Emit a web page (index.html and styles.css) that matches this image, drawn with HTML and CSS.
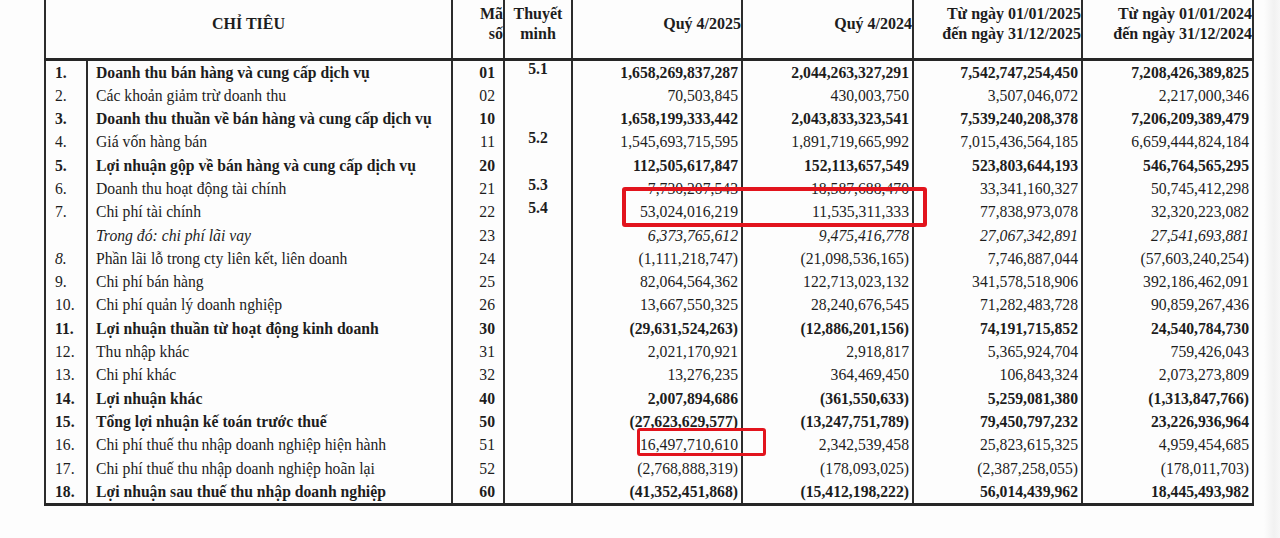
FILE: index.html
```html
<!DOCTYPE html>
<html lang="vi">
<head>
<meta charset="utf-8">
<title>Kết quả hoạt động kinh doanh</title>
<link rel="stylesheet" href="styles.css">
</head>
<body>
<div class="sheet">
  <table class="report">
    <colgroup>
      <col class="c-stt"><col class="c-name"><col class="c-code"><col class="c-note">
      <col class="c-q1"><col class="c-q2"><col class="c-y1"><col class="c-y2">
    </colgroup>
    <thead>
      <tr>
        <th colspan="2" class="h-title">CHỈ TIÊU</th>
        <th class="h-code">Mã<br>số</th>
        <th class="h-note">Thuyết<br>minh</th>
        <th class="h-num">Quý 4/2025</th>
        <th class="h-num">Quý 4/2024</th>
        <th class="h-num h-reg">Từ ngày 01/01/2025<br>đến ngày 31/12/2025</th>
        <th class="h-num h-reg">Từ ngày 01/01/2024<br>đến ngày 31/12/2024</th>
      </tr>
    </thead>
    <tbody>
      <tr class="b"><td class="stt">1.</td><td class="name">Doanh thu bán hàng và cung cấp dịch vụ</td><td class="code">01</td><td class="note">5.1</td><td class="num">1,658,269,837,287</td><td class="num">2,044,263,327,291</td><td class="num">7,542,747,254,450</td><td class="num">7,208,426,389,825</td></tr>
      <tr><td class="stt">2.</td><td class="name">Các khoản giảm trừ doanh thu</td><td class="code">02</td><td class="note"></td><td class="num">70,503,845</td><td class="num">430,003,750</td><td class="num">3,507,046,072</td><td class="num">2,217,000,346</td></tr>
      <tr class="b"><td class="stt">3.</td><td class="name">Doanh thu thuần về bán hàng và cung cấp dịch vụ</td><td class="code">10</td><td class="note"></td><td class="num">1,658,199,333,442</td><td class="num">2,043,833,323,541</td><td class="num">7,539,240,208,378</td><td class="num">7,206,209,389,479</td></tr>
      <tr><td class="stt">4.</td><td class="name">Giá vốn hàng bán</td><td class="code">11</td><td class="note">5.2</td><td class="num">1,545,693,715,595</td><td class="num">1,891,719,665,992</td><td class="num">7,015,436,564,185</td><td class="num">6,659,444,824,184</td></tr>
      <tr class="b"><td class="stt">5.</td><td class="name">Lợi nhuận gộp về bán hàng và cung cấp dịch vụ</td><td class="code">20</td><td class="note"></td><td class="num">112,505,617,847</td><td class="num">152,113,657,549</td><td class="num">523,803,644,193</td><td class="num">546,764,565,295</td></tr>
      <tr><td class="stt">6.</td><td class="name">Doanh thu hoạt động tài chính</td><td class="code">21</td><td class="note">5.3</td><td class="num">7,730,207,543</td><td class="num">18,587,688,470</td><td class="num">33,341,160,327</td><td class="num">50,745,412,298</td></tr>
      <tr><td class="stt">7.</td><td class="name">Chi phí tài chính</td><td class="code">22</td><td class="note">5.4</td><td class="num">53,024,016,219</td><td class="num">11,535,311,333</td><td class="num">77,838,973,078</td><td class="num">32,320,223,082</td></tr>
      <tr class="i"><td class="stt"></td><td class="name">Trong đó: chi phí lãi vay</td><td class="code">23</td><td class="note"></td><td class="num">6,373,765,612</td><td class="num">9,475,416,778</td><td class="num">27,067,342,891</td><td class="num">27,541,693,881</td></tr>
      <tr><td class="stt it">8.</td><td class="name">Phần lãi lỗ trong cty liên kết, liên doanh</td><td class="code">24</td><td class="note"></td><td class="num">(1,111,218,747)</td><td class="num">(21,098,536,165)</td><td class="num">7,746,887,044</td><td class="num">(57,603,240,254)</td></tr>
      <tr><td class="stt">9.</td><td class="name">Chi phí bán hàng</td><td class="code">25</td><td class="note"></td><td class="num">82,064,564,362</td><td class="num">122,713,023,132</td><td class="num">341,578,518,906</td><td class="num">392,186,462,091</td></tr>
      <tr><td class="stt">10.</td><td class="name">Chi phí quản lý doanh nghiệp</td><td class="code">26</td><td class="note"></td><td class="num">13,667,550,325</td><td class="num">28,240,676,545</td><td class="num">71,282,483,728</td><td class="num">90,859,267,436</td></tr>
      <tr class="b"><td class="stt">11.</td><td class="name">Lợi nhuận thuần từ hoạt động kinh doanh</td><td class="code">30</td><td class="note"></td><td class="num">(29,631,524,263)</td><td class="num">(12,886,201,156)</td><td class="num">74,191,715,852</td><td class="num">24,540,784,730</td></tr>
      <tr><td class="stt">12.</td><td class="name">Thu nhập khác</td><td class="code">31</td><td class="note"></td><td class="num">2,021,170,921</td><td class="num">2,918,817</td><td class="num">5,365,924,704</td><td class="num">759,426,043</td></tr>
      <tr><td class="stt">13.</td><td class="name">Chi phí khác</td><td class="code">32</td><td class="note"></td><td class="num">13,276,235</td><td class="num">364,469,450</td><td class="num">106,843,324</td><td class="num">2,073,273,809</td></tr>
      <tr class="b"><td class="stt">14.</td><td class="name">Lợi nhuận khác</td><td class="code">40</td><td class="note"></td><td class="num">2,007,894,686</td><td class="num">(361,550,633)</td><td class="num">5,259,081,380</td><td class="num">(1,313,847,766)</td></tr>
      <tr class="b"><td class="stt">15.</td><td class="name">Tổng lợi nhuận kế toán trước thuế</td><td class="code">50</td><td class="note"></td><td class="num">(27,623,629,577)</td><td class="num">(13,247,751,789)</td><td class="num">79,450,797,232</td><td class="num">23,226,936,964</td></tr>
      <tr><td class="stt">16.</td><td class="name">Chi phí thuế thu nhập doanh nghiệp hiện hành</td><td class="code">51</td><td class="note"></td><td class="num">16,497,710,610</td><td class="num">2,342,539,458</td><td class="num">25,823,615,325</td><td class="num">4,959,454,685</td></tr>
      <tr><td class="stt">17.</td><td class="name">Chi phí thuế thu nhập doanh nghiệp hoãn lại</td><td class="code">52</td><td class="note"></td><td class="num">(2,768,888,319)</td><td class="num">(178,093,025)</td><td class="num">(2,387,258,055)</td><td class="num">(178,011,703)</td></tr>
      <tr class="b last"><td class="stt">18.</td><td class="name">Lợi nhuận sau thuế thu nhập doanh nghiệp</td><td class="code">60</td><td class="note"></td><td class="num">(41,352,451,868)</td><td class="num">(15,412,198,222)</td><td class="num">56,014,439,962</td><td class="num">18,445,493,982</td></tr>
    </tbody>
  </table>
  <div class="mark mark-fin" aria-hidden="true"></div>
  <div class="mark mark-tax" aria-hidden="true"></div>
</div>
</body>
</html>
```

FILE: styles.css
```css
html, body {
  margin: 0;
  padding: 0;
}

body {
  width: 1280px;
  height: 538px;
  overflow: hidden;
  background: linear-gradient(to right, #fdfdfd 0, #fdfdfd 1264px, #f1f1f1 1274px, #f7f7f7 1280px);
  color: #1d1d1d;
  font-family: "Liberation Serif", "Times New Roman", serif;
}

.sheet {
  position: relative;
  width: 1280px;
  height: 538px;
}

.report {
  margin-left: 44px;
  width: 1210px;
  table-layout: fixed;
  border-collapse: collapse;
  font-size: 15.7px;
  line-height: 20px;
}

.c-stt { width: 42px; }
.c-name { width: 365px; }
.c-code { width: 52px; }
.c-note { width: 68px; }
.c-q1 { width: 170px; }
.c-q2 { width: 171px; }
.c-y1 { width: 169px; }
.c-y2 { width: 171px; }

.report th,
.report td {
  padding: 0;
  border-left: 2px solid #2c2c2c;
  border-right: 2px solid #2c2c2c;
  white-space: nowrap;
}

/* header */
.report thead tr {
  height: 59px;
}

.report th {
  font-size: 16px;
  font-weight: bold;
  vertical-align: middle;
  padding-bottom: 9px;
  border-bottom: 3px solid #262626;
}

.h-title {
  text-align: center;
}

.h-code {
  text-align: right;
  padding-right: 1px;
}

.h-note {
  text-align: center;
}

.h-num {
  text-align: right;
  padding-right: 3px;
}

.h-reg {
  font-weight: normal;
}

/* body */
.report td {
  vertical-align: middle;
  line-height: 23.3px;
}

.report tbody tr.last td {
  border-bottom: 3px solid #262626;
}

.stt {
  padding-left: 9px !important;
}

.name {
  padding-left: 8px !important;
}

.code {
  text-align: right;
  padding-right: 8px !important;
}

.note {
  text-align: center;
  font-weight: bold;
  vertical-align: top !important;
  line-height: 16px !important;
}

.num {
  text-align: right;
  padding-right: 3px !important;
}

.b td {
  font-weight: bold;
}

.i .name,
.i .num,
.it {
  font-style: italic;
}

/* red highlight frames drawn over the photo */
.mark {
  position: absolute;
  border: 3px solid #e2141d;
  border-radius: 3px;
  box-sizing: border-box;
}

.mark-fin {
  left: 622px;
  top: 187px;
  width: 305px;
  height: 40px;
  border-width: 4px;
}

.mark-tax {
  left: 637px;
  top: 428px;
  width: 129px;
  height: 28px;
}
```
